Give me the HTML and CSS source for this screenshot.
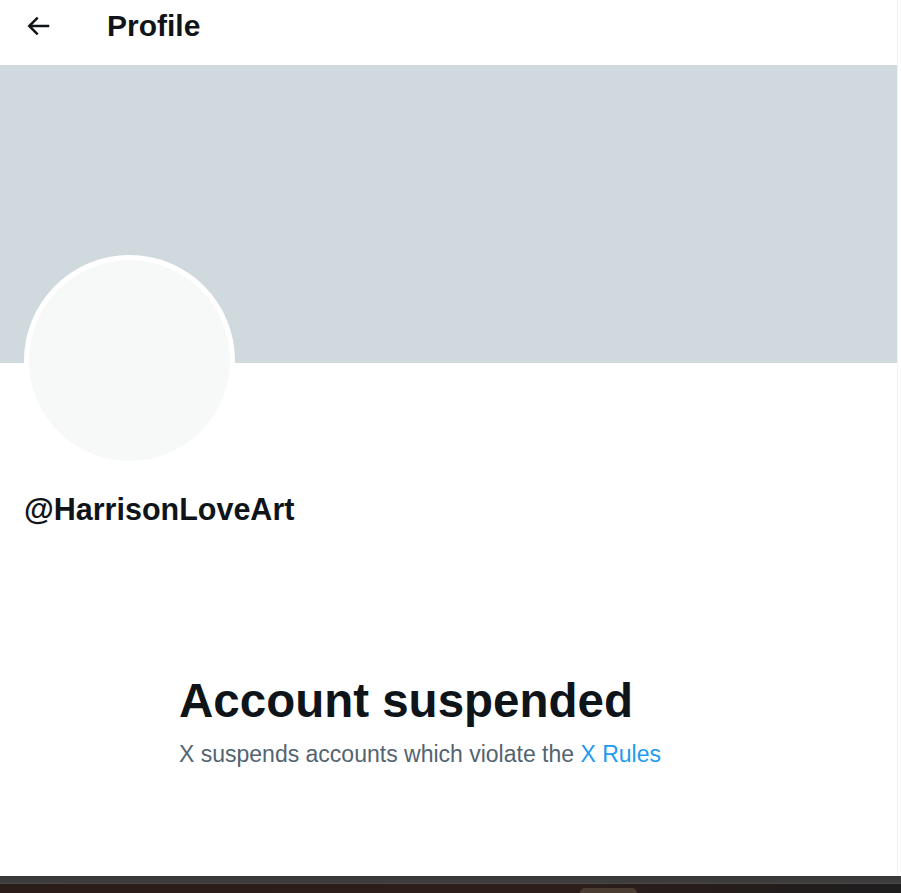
FILE: index.html
```html
<!DOCTYPE html>
<html lang="en">
<head>
<meta charset="utf-8">
<title>Profile / X</title>
<link rel="stylesheet" href="styles.css">
</head>
<body>
<div class="page">
  <main class="column">
    <header class="topbar">
      <button class="back" aria-label="Back">
        <svg viewBox="0 0 24 24" width="30" height="30" aria-hidden="true"><path d="M7.414 13l5.043 5.04-1.414 1.42L3.586 12l7.457-7.46 1.414 1.42L7.414 11H21v2H7.414z"/></svg>
      </button>
      <h2 class="title">Profile</h2>
    </header>
    <div class="banner"></div>
    <section class="profile">
      <div class="avatar"><div class="avatar-inner"></div></div>
      <div class="handle">@HarrisonLoveArt</div>
    </section>
    <section class="empty">
      <h1 class="empty-title">Account suspended</h1>
      <p class="empty-text">X suspends accounts which violate the <a href="#" class="link">X Rules</a></p>
    </section>
  </main>
  <footer class="taskbar">
    <div class="taskbar-top"></div>
    <div class="taskbar-line"></div>
    <div class="taskbar-body"><span class="taskbar-tab"></span></div>
  </footer>
</div>
</body>
</html>
```
FILE: styles.css
```css
html, body {
  margin: 0;
  padding: 0;
  background: #ffffff;
}
body {
  font-family: "Liberation Sans", Arial, sans-serif;
  color: #0f1419;
  overflow: hidden;
}
.page {
  width: 901px;
  height: 893px;
  display: flex;
  flex-direction: column;
}
.column {
  width: 897px;
  height: 876px;
  border-right: 1px solid #eff3f4;
  display: flex;
  flex-direction: column;
}
.topbar {
  height: 65px;
  box-sizing: border-box;
  padding: 0 0 13px 23px;
  display: flex;
  align-items: center;
}
.back {
  width: 30px;
  height: 30px;
  padding: 0;
  margin: 0;
  border: 0;
  background: none;
  display: flex;
  align-items: center;
  justify-content: center;
}
.back svg {
  fill: #0f1419;
  display: block;
}
.title {
  margin: 0 0 0 54px;
  font-size: 30px;
  font-weight: 700;
  line-height: 36px;
  letter-spacing: 0;
}
.banner {
  height: 298px;
  background: #cfd9de;
}
.profile {
  padding: 0 24px;
  display: flex;
  flex-direction: column;
}
.avatar {
  width: 211px;
  height: 211px;
  box-sizing: border-box;
  margin-top: -108px;
  border-radius: 50%;
  background: #ffffff;
  padding: 5px;
}
.avatar-inner {
  width: 100%;
  height: 100%;
  border-radius: 50%;
  background: #f7f9f9;
}
.handle {
  margin-top: 25px;
  font-size: 30.5px;
  font-weight: 700;
  line-height: 36px;
}
.empty {
  padding: 146px 0 0 179px;
}
.empty-title {
  margin: 0;
  font-size: 47.5px;
  font-weight: 700;
  line-height: 56px;
}
.empty-text {
  margin: 10px 0 0;
  font-size: 23px;
  line-height: 30px;
  color: #536471;
}
.link {
  color: #1d9bf0;
  text-decoration: none;
}
.taskbar {
  height: 17px;
  display: flex;
  flex-direction: column;
}
.taskbar-top {
  height: 7px;
  background: linear-gradient(#383838, #3e3e3e);
}
.taskbar-line {
  height: 1px;
  background: #4c4545;
}
.taskbar-body {
  flex: 1;
  background: linear-gradient(90deg, #2b1d1a 0%, #2e1e1b 60%, #231d1c 85%, #1e1e1e 100%);
  padding-left: 580px;
  display: flex;
  align-items: flex-end;
}
.taskbar-tab {
  width: 57px;
  height: 5px;
  background: #4b3c32;
  border-radius: 5px 5px 0 0;
}
```
